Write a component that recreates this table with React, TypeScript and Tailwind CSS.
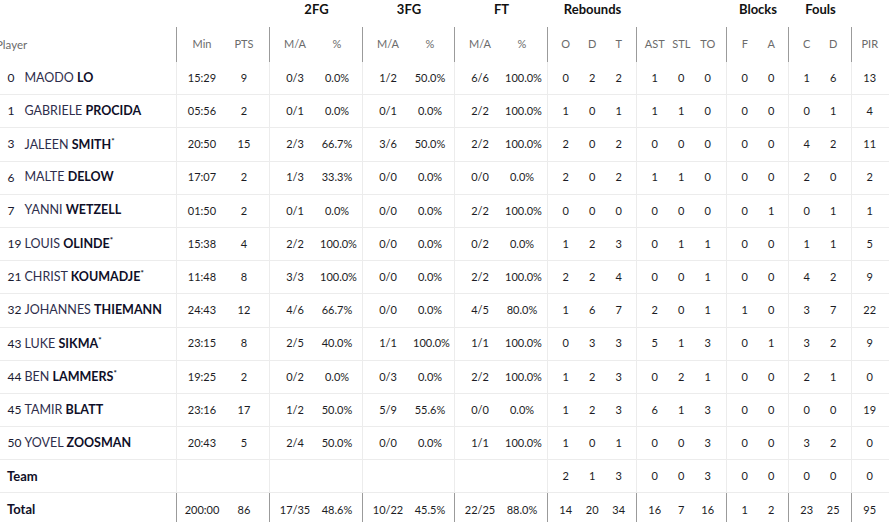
import React from "react";

type P = {
  no: string;
  first: string;
  last: string;
  star?: boolean;
  min: string;
  pts: string;
  fg2: [string, string];
  fg3: [string, string];
  ft: [string, string];
  reb: [string, string, string];
  misc: [string, string, string];
  blk: [string, string];
  fls: [string, string];
  pir: string;
};

const players: P[] = [
  { no: "0", first: "MAODO", last: "LO", min: "15:29", pts: "9", fg2: ["0/3", "0.0%"], fg3: ["1/2", "50.0%"], ft: ["6/6", "100.0%"], reb: ["0", "2", "2"], misc: ["1", "0", "0"], blk: ["0", "0"], fls: ["1", "6"], pir: "13" },
  { no: "1", first: "GABRIELE", last: "PROCIDA", min: "05:56", pts: "2", fg2: ["0/1", "0.0%"], fg3: ["0/1", "0.0%"], ft: ["2/2", "100.0%"], reb: ["1", "0", "1"], misc: ["1", "1", "0"], blk: ["0", "0"], fls: ["0", "1"], pir: "4" },
  { no: "3", first: "JALEEN", last: "SMITH", star: true, min: "20:50", pts: "15", fg2: ["2/3", "66.7%"], fg3: ["3/6", "50.0%"], ft: ["2/2", "100.0%"], reb: ["2", "0", "2"], misc: ["0", "0", "0"], blk: ["0", "0"], fls: ["4", "2"], pir: "11" },
  { no: "6", first: "MALTE", last: "DELOW", min: "17:07", pts: "2", fg2: ["1/3", "33.3%"], fg3: ["0/0", "0.0%"], ft: ["0/0", "0.0%"], reb: ["2", "0", "2"], misc: ["1", "1", "0"], blk: ["0", "0"], fls: ["2", "0"], pir: "2" },
  { no: "7", first: "YANNI", last: "WETZELL", min: "01:50", pts: "2", fg2: ["0/1", "0.0%"], fg3: ["0/0", "0.0%"], ft: ["2/2", "100.0%"], reb: ["0", "0", "0"], misc: ["0", "0", "0"], blk: ["0", "1"], fls: ["0", "1"], pir: "1" },
  { no: "19", first: "LOUIS", last: "OLINDE", star: true, min: "15:38", pts: "4", fg2: ["2/2", "100.0%"], fg3: ["0/0", "0.0%"], ft: ["0/2", "0.0%"], reb: ["1", "2", "3"], misc: ["0", "1", "1"], blk: ["0", "0"], fls: ["1", "1"], pir: "5" },
  { no: "21", first: "CHRIST", last: "KOUMADJE", star: true, min: "11:48", pts: "8", fg2: ["3/3", "100.0%"], fg3: ["0/0", "0.0%"], ft: ["2/2", "100.0%"], reb: ["2", "2", "4"], misc: ["0", "0", "1"], blk: ["0", "0"], fls: ["4", "2"], pir: "9" },
  { no: "32", first: "JOHANNES", last: "THIEMANN", min: "24:43", pts: "12", fg2: ["4/6", "66.7%"], fg3: ["0/0", "0.0%"], ft: ["4/5", "80.0%"], reb: ["1", "6", "7"], misc: ["2", "0", "1"], blk: ["1", "0"], fls: ["3", "7"], pir: "22" },
  { no: "43", first: "LUKE", last: "SIKMA", star: true, min: "23:15", pts: "8", fg2: ["2/5", "40.0%"], fg3: ["1/1", "100.0%"], ft: ["1/1", "100.0%"], reb: ["0", "3", "3"], misc: ["5", "1", "3"], blk: ["0", "1"], fls: ["3", "2"], pir: "9" },
  { no: "44", first: "BEN", last: "LAMMERS", star: true, min: "19:25", pts: "2", fg2: ["0/2", "0.0%"], fg3: ["0/3", "0.0%"], ft: ["2/2", "100.0%"], reb: ["1", "2", "3"], misc: ["0", "2", "1"], blk: ["0", "0"], fls: ["2", "1"], pir: "0" },
  { no: "45", first: "TAMIR", last: "BLATT", min: "23:16", pts: "17", fg2: ["1/2", "50.0%"], fg3: ["5/9", "55.6%"], ft: ["0/0", "0.0%"], reb: ["1", "2", "3"], misc: ["6", "1", "3"], blk: ["0", "0"], fls: ["0", "0"], pir: "19" },
  { no: "50", first: "YOVEL", last: "ZOOSMAN", min: "20:43", pts: "5", fg2: ["2/4", "50.0%"], fg3: ["0/0", "0.0%"], ft: ["1/1", "100.0%"], reb: ["1", "0", "1"], misc: ["0", "0", "3"], blk: ["0", "0"], fls: ["3", "2"], pir: "0" },
];

const team: P = { no: "", first: "", last: "", min: "", pts: "", fg2: ["", ""], fg3: ["", ""], ft: ["", ""], reb: ["2", "1", "3"], misc: ["0", "0", "3"], blk: ["0", "0"], fls: ["0", "0"], pir: "0" };
const total: P = { no: "", first: "", last: "", min: "200:00", pts: "86", fg2: ["17/35", "48.6%"], fg3: ["10/22", "45.5%"], ft: ["22/25", "88.0%"], reb: ["14", "20", "34"], misc: ["16", "7", "16"], blk: ["1", "2"], fls: ["23", "25"], pir: "95" };

const line = "border-r border-[#9b9b9b]";
const sep = "border-b border-[#ececec]";

function Wide({ a, b }: { a: string; b: string }) {
  return (
    <>
      <div className="w-[50px] shrink-0 text-center">{a}</div>
      <div className="w-[34px] shrink-0 text-center whitespace-nowrap">{b}</div>
    </>
  );
}

function Narrow({ items }: { items: string[] }) {
  return (
    <>
      {items.map((v, i) => (
        <div key={i} className="w-[26.5px] shrink-0 text-center whitespace-nowrap">
          {v}
        </div>
      ))}
    </>
  );
}

function StatCells({ p, cellCls, h }: { p: P; cellCls: string; h: string }) {
  const g = `flex items-center shrink-0 ${line} ${cellCls} ${h}`;
  return (
    <>
      <div className={`${g} w-[93px]`}>
        <Wide a={p.min} b={p.pts} />
      </div>
      <div className={`${g} w-[93px]`}>
        <Wide a={p.fg2[0]} b={p.fg2[1]} />
      </div>
      <div className={`${g} w-[92px]`}>
        <Wide a={p.fg3[0]} b={p.fg3[1]} />
      </div>
      <div className={`${g} w-[93px]`}>
        <Wide a={p.ft[0]} b={p.ft[1]} />
      </div>
      <div className={`${g} w-[89px] pl-[4.5px]`}>
        <Narrow items={p.reb} />
      </div>
      <div className={`${g} w-[90px] pl-[4.5px]`}>
        <Narrow items={p.misc} />
      </div>
      <div className={`${g} w-[62px] pl-[4.5px]`}>
        <Narrow items={p.blk} />
      </div>
      <div className={`${g} w-[63px] pl-[4.5px]`}>
        <Narrow items={p.fls} />
      </div>
      <div className={`flex items-center shrink-0 ${cellCls} ${h} w-[60px] pl-[4.5px]`}>
        <Narrow items={[p.pir]} />
      </div>
    </>
  );
}

function PlayerRow({ p }: { p: P }) {
  return (
    <div className="flex text-[11px] text-[#1c1c24]">
      <div className={`flex items-center shrink-0 w-[191px] h-[33.2px] pl-[21.5px] ${line} ${sep}`}>
        <span className="w-[17px] shrink-0 text-[12px] text-[#1a1a30]">{p.no}</span>
        <span className="text-[12.5px] whitespace-nowrap">
          <span className="text-[#2e2e4c]">{p.first} </span>
          <span className="font-bold text-[#0f0f28]">{p.last}</span>
          {p.star && <span className="align-super text-[8px] font-bold text-[#0f0f28]">*</span>}
        </span>
      </div>
      <StatCells p={p} cellCls={sep} h="h-[33.2px]" />
    </div>
  );
}

function LabelRow({ label, p, last }: { label: string; p: P; last?: boolean }) {
  const s = last ? "" : sep;
  return (
    <div className="flex text-[11px] text-[#1c1c24]">
      <div className={`flex items-center shrink-0 w-[191px] h-[33.2px] pl-[21px] ${line} ${s}`}>
        <span className="text-[13px] font-bold text-[#0f0f28]">{label}</span>
      </div>
      <StatCells p={p} cellCls={s} h="h-[33.2px]" />
    </div>
  );
}

export default function App() {
  const head: P = { no: "", first: "", last: "", min: "Min", pts: "PTS", fg2: ["M/A", "%"], fg3: ["M/A", "%"], ft: ["M/A", "%"], reb: ["O", "D", "T"], misc: ["AST", "STL", "TO"], blk: ["F", "A"], fls: ["C", "D"], pir: "PIR" };
  return (
    <div className="w-[889px] h-[522px] overflow-hidden bg-white" style={{ fontFamily: "Lato, 'Noto Sans', sans-serif" }}>
      <div className="-ml-[14px] w-[920px]">
        <div className="flex h-[27px] text-[13px] font-bold text-[#111111] leading-[18px]">
          <div className="w-[284px] shrink-0" />
          <div className="w-[93px] shrink-0 text-center">2FG</div>
          <div className="w-[92px] shrink-0 text-center">3FG</div>
          <div className="w-[93px] shrink-0 text-center">FT</div>
          <div className="w-[89px] shrink-0 text-center">Rebounds</div>
          <div className="w-[90px] shrink-0" />
          <div className="w-[62px] shrink-0 text-center">Blocks</div>
          <div className="w-[63px] shrink-0 text-center">Fouls</div>
        </div>
        <div className="flex text-[11px] text-[#6b6b6b]">
          <div className={`flex items-center shrink-0 w-[191px] h-[35px] pl-[10px] ${line}`}>
            <span className="text-[11.5px]">Player</span>
          </div>
          <StatCells p={head} cellCls="" h="h-[35px]" />
        </div>
        {players.map((p) => (
          <PlayerRow key={p.no} p={p} />
        ))}
        <LabelRow label="Team" p={team} />
        <LabelRow label="Total" p={total} last />
      </div>
    </div>
  );
}
